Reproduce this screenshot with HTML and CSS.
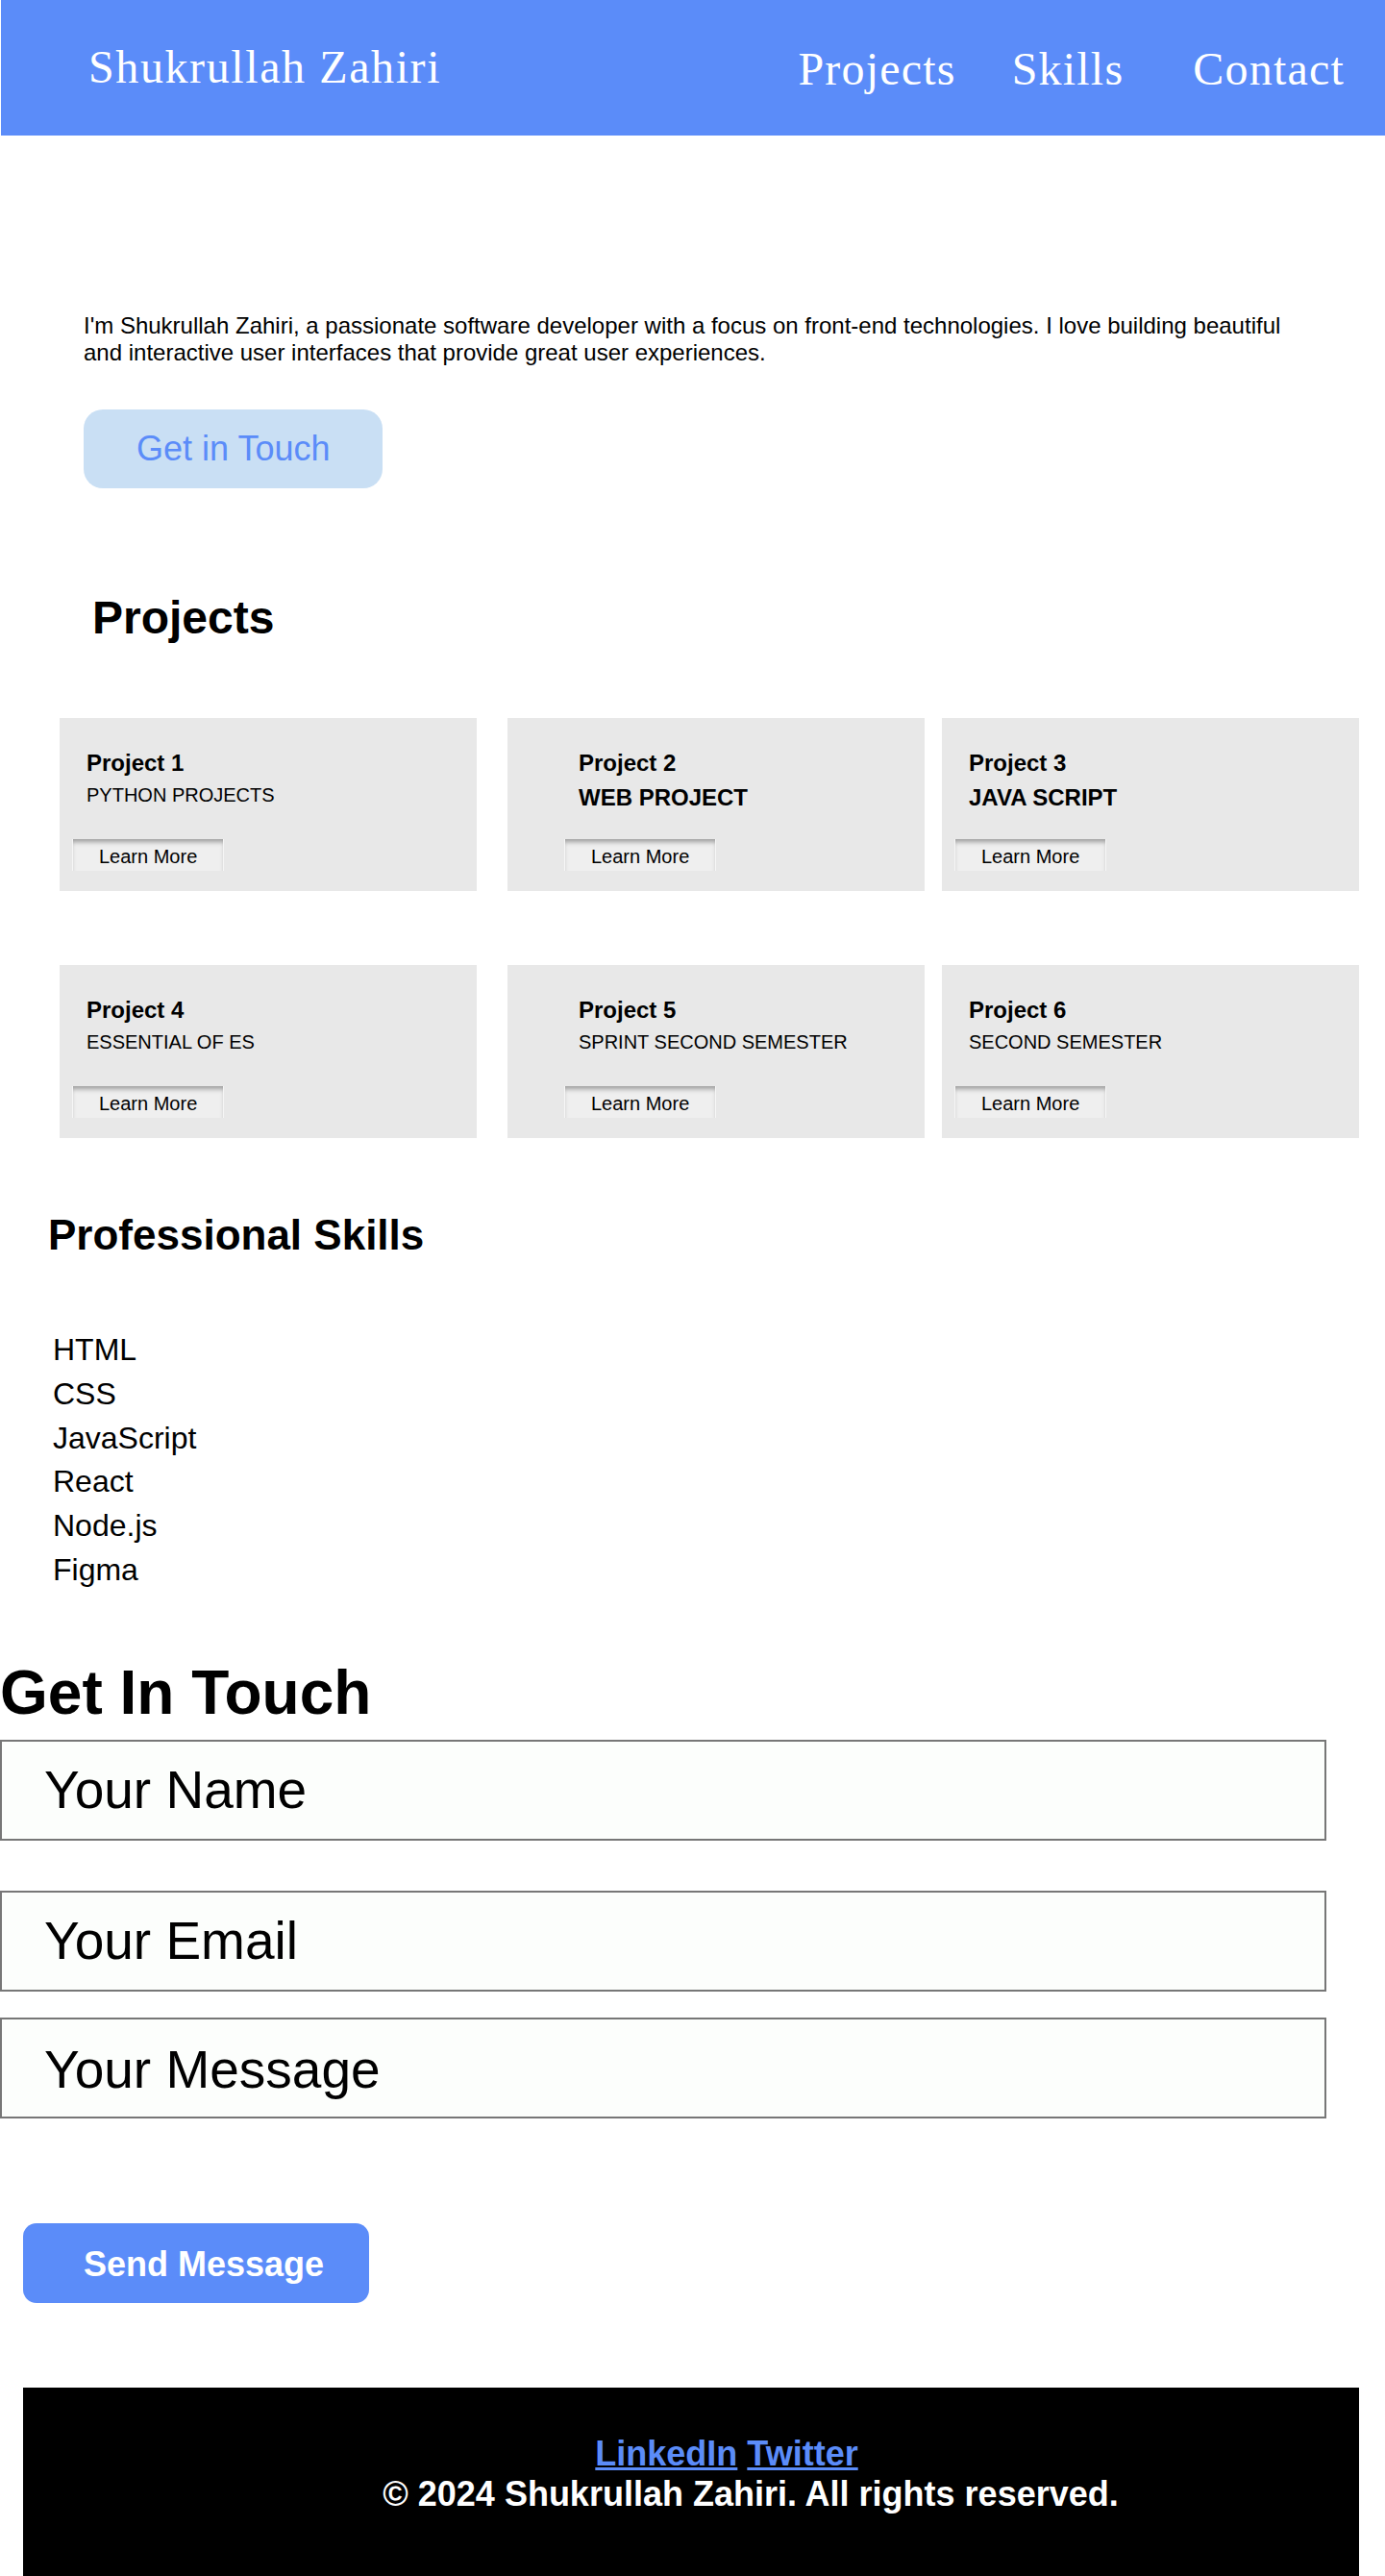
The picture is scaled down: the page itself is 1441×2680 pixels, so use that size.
FILE: index.html
```html
<!DOCTYPE html>
<html lang="en">
<head>
<meta charset="utf-8">
<title>Shukrullah Zahiri - Portfolio</title>
<link rel="stylesheet" href="styles.css">
</head>
<body>
<header class="site-header">
  <div class="logo">Shukrullah Zahiri</div>
  <nav class="main-nav">
    <ul class="nav-list">
      <li class="nav-item"><a href="#projects">Projects</a></li>
      <li class="nav-item"><a href="#skills">Skills</a></li>
      <li class="nav-item nav-item-last"><a href="#contact">Contact</a></li>
    </ul>
  </nav>
</header>
<main>
  <section class="hero">
    <p class="hero-text">I'm Shukrullah Zahiri, a passionate software developer with a focus on front-end technologies. I love building beautiful and interactive user interfaces that provide great user experiences.</p>
    <a class="btn-touch" href="#contact">Get in Touch</a>
  </section>

  <section class="projects" id="projects">
    <h2 class="projects-title">Projects</h2>
    <div class="project-grid">
      <article class="project-card">
        <h3 class="project-name">Project 1</h3>
        <p class="project-desc">PYTHON PROJECTS</p>
        <button class="learn-btn">Learn More</button>
      </article>
      <article class="project-card project-card-mid">
        <h3 class="project-name">Project 2</h3>
        <p class="project-desc project-desc-bold">WEB PROJECT</p>
        <button class="learn-btn">Learn More</button>
      </article>
      <article class="project-card">
        <h3 class="project-name">Project 3</h3>
        <p class="project-desc project-desc-bold">JAVA SCRIPT</p>
        <button class="learn-btn">Learn More</button>
      </article>
      <article class="project-card">
        <h3 class="project-name">Project 4</h3>
        <p class="project-desc">ESSENTIAL OF ES</p>
        <button class="learn-btn">Learn More</button>
      </article>
      <article class="project-card project-card-mid">
        <h3 class="project-name">Project 5</h3>
        <p class="project-desc">SPRINT SECOND SEMESTER</p>
        <button class="learn-btn">Learn More</button>
      </article>
      <article class="project-card">
        <h3 class="project-name">Project 6</h3>
        <p class="project-desc">SECOND SEMESTER</p>
        <button class="learn-btn">Learn More</button>
      </article>
    </div>
  </section>

  <section class="skills" id="skills">
    <h2 class="skills-title">Professional Skills</h2>
    <ul class="skill-list">
      <li>HTML</li>
      <li>CSS</li>
      <li>JavaScript</li>
      <li>React</li>
      <li>Node.js</li>
      <li>Figma</li>
    </ul>
  </section>

  <section class="contact" id="contact">
    <h1 class="contact-title">Get In Touch</h1>
    <form class="contact-form">
      <input class="field field-name" type="text" placeholder="Your Name">
      <input class="field field-email" type="email" placeholder="Your Email">
      <textarea class="field field-message" placeholder="Your Message"></textarea>
      <button class="send-btn" type="submit">Send Message</button>
    </form>
  </section>
</main>
<footer class="site-footer">
  <div class="social"><a href="#">LinkedIn</a> <a href="#">Twitter</a></div>
  <p class="copyright">© 2024 Shukrullah Zahiri. All rights reserved.</p>
</footer>
</body>
</html>
```
FILE: styles.css
```css
body {
  margin: 0;
  font-family: "Liberation Sans", Arial, sans-serif;
  color: #000;
  background: #fff;
}

/* Header */
.site-header {
  display: flex;
  justify-content: space-between;
  align-items: flex-start;
  height: 141px;
  margin-left: 1px;
  padding: 0 42px 0 91px;
  background: #5b8cf9;
  box-sizing: border-box;
}

.logo {
  padding-top: 42px;
  font-family: "Liberation Serif", "Times New Roman", serif;
  font-size: 48px;
  line-height: 55px;
  letter-spacing: 1.6px;
  color: #fff;
}

.main-nav {
  padding-top: 44px;
}

.nav-list {
  display: flex;
  gap: 58px;
  margin: 0;
  padding: 0;
  list-style: none;
}

.nav-item-last {
  margin-left: 14px;
}

.nav-item a {
  font-family: "Liberation Serif", "Times New Roman", serif;
  font-size: 48px;
  line-height: 55px;
  letter-spacing: 1.2px;
  color: #fff;
  text-decoration: none;
}

/* Hero */
.hero {
  padding: 184px 87px 0 87px;
}

.hero-text {
  margin: 0;
  font-size: 24px;
}

.btn-touch {
  display: inline-block;
  margin-top: 45px;
  padding: 21px 55px;
  font-size: 36px;
  line-height: 40px;
  color: #5b8cf9;
  background: #c9dff4;
  border-radius: 20px;
  text-decoration: none;
}

/* Projects */
.projects {
  padding-top: 107px;
}

.projects-title {
  margin: 0;
  padding-left: 96px;
  font-size: 48px;
}

.project-grid {
  display: grid;
  grid-template-columns: 434px 448px 434px;
  column-gap: 18px;
  row-gap: 77px;
  margin-top: 77px;
  padding-left: 62px;
}

.project-card {
  display: flex;
  flex-direction: column;
  align-items: flex-start;
  height: 180px;
  padding: 33px 13px 21px;
  background: #e8e8e8;
  box-sizing: border-box;
}

.project-card-mid {
  margin-left: 14px;
  padding-left: 59px;
}

.project-name {
  margin: 0 0 0 15px;
  font-size: 24px;
}

.project-desc {
  margin: 8px 0 0 15px;
  font-size: 20px;
}

.project-desc-bold {
  font-size: 24px;
  font-weight: bold;
}

.learn-btn {
  margin-top: auto;
  height: 33px;
  padding: 3px 27px 0;
  font-family: "Liberation Sans", Arial, sans-serif;
  font-size: 20px;
  color: #000;
  background: #efefef;
  border: 0;
  border-left: 1px solid #f6f6f6;
  border-right: 1px solid #f6f6f6;
  box-shadow: inset 0 5px 5px -2px rgba(0, 0, 0, 0.35);
}

/* Skills */
.skills {
  padding-top: 76px;
}

.skills-title {
  margin: 0;
  padding-left: 50px;
  font-size: 44px;
}

.skill-list {
  margin: 72px 0 0;
  padding-left: 55px;
  list-style: none;
  font-size: 32px;
  line-height: 45.8px;
}

/* Contact */
.contact {
  padding-top: 67px;
}

.contact-title {
  margin: 0;
  font-size: 64px;
}

.contact-form {
  margin-top: 12px;
}

.field {
  display: block;
  width: 1380px;
  height: 105px;
  margin: 0;
  padding: 0 44px;
  font-family: "Liberation Sans", Arial, sans-serif;
  font-size: 55px;
  color: #000;
  background: #fcfefc;
  border: 2px solid #777;
  box-sizing: border-box;
}

.field::placeholder {
  color: #000;
  opacity: 1;
}

.field-name {
  margin-bottom: 52px;
}

.field-email {
  margin-bottom: 27px;
}

.field-message {
  padding-top: 20px;
  resize: none;
  overflow: hidden;
}

.send-btn {
  display: block;
  height: 83px;
  margin: 109px 0 0 24px;
  padding: 3px 47px 0 63px;
  font-family: "Liberation Sans", Arial, sans-serif;
  font-size: 36px;
  font-weight: bold;
  color: #fff;
  background: #5b8cf9;
  border: 0;
  border-radius: 14px;
}

/* Footer */
.site-footer {
  margin: 88px 27px 0 24px;
  padding: 48px 0 67px 74px;
  background: #000;
  text-align: center;
  font-size: 36px;
  font-weight: bold;
}

.social a {
  color: #5b8cf9;
  text-decoration: underline;
}

.copyright {
  margin: 0;
  padding-left: 50px;
  color: #fff;
}
```
